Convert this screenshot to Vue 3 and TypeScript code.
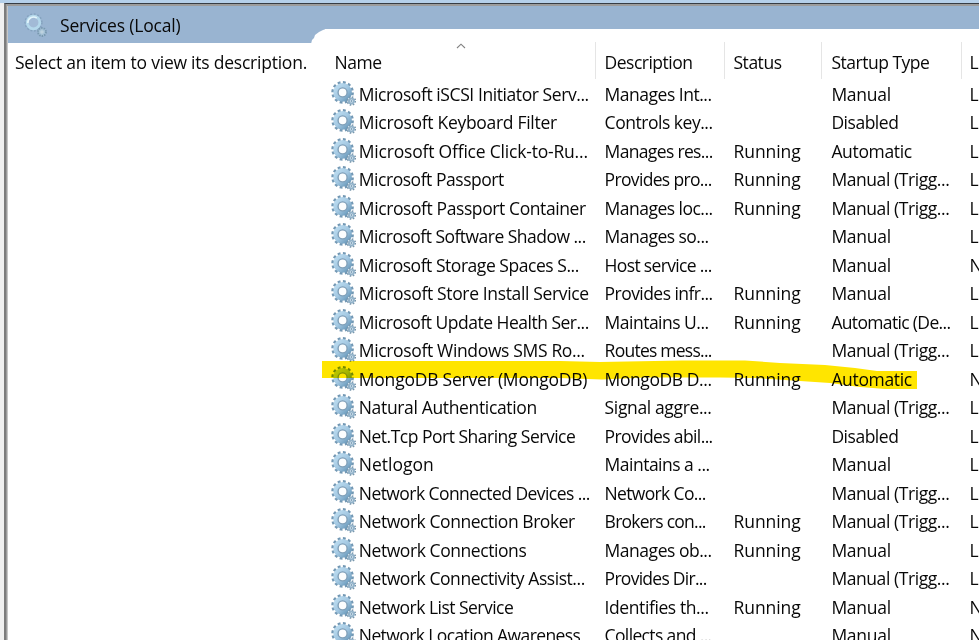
<script setup lang="ts">
interface Service {
  name: string
  nameWidth: number
  description: string
  descriptionWidth: number
  running: boolean
  startup: keyof typeof startupWidths
  logon: string
}

const startupWidths = {
  'Manual': 59.5,
  'Disabled': 67,
  'Automatic': 80.5,
  'Manual (Trigg...': 118,
  'Automatic (De...': 119,
}

const row = (
  name: string, nameWidth: number, description: string, descriptionWidth: number,
  running: boolean, startup: keyof typeof startupWidths, logon = 'Loc...',
): Service => ({ name, nameWidth, description, descriptionWidth, running, startup, logon })

const services: Service[] = [
  row('Microsoft iSCSI Initiator Serv...', 230, 'Manages Int...', 107, false, 'Manual'),
  row('Microsoft Keyboard Filter', 198, 'Controls key...', 108, false, 'Disabled'),
  row('Microsoft Office Click-to-Ru...', 229, 'Manages res...', 108, true, 'Automatic'),
  row('Microsoft Passport', 145, 'Provides pro...', 107, true, 'Manual (Trigg...'),
  row('Microsoft Passport Container', 227, 'Manages loc...', 108, true, 'Manual (Trigg...'),
  row('Microsoft Software Shadow ...', 227, 'Manages so...', 104, false, 'Manual'),
  row('Microsoft Storage Spaces S...', 220, 'Host service ...', 107, false, 'Manual', 'Net...'),
  row('Microsoft Store Install Service', 230, 'Provides infr...', 108, true, 'Manual'),
  row('Microsoft Update Health Ser...', 230, 'Maintains U...', 104, true, 'Automatic (De...'),
  row('Microsoft Windows SMS Ro...', 226, 'Routes mess...', 107, false, 'Manual (Trigg...'),
  row('MongoDB Server (MongoDB)', 228.5, 'MongoDB D...', 107, true, 'Automatic', 'Net...'),
  row('Natural Authentication', 178, 'Signal aggre...', 107, false, 'Manual (Trigg...'),
  row('Net.Tcp Port Sharing Service', 216.5, 'Provides abil...', 108, false, 'Disabled'),
  row('Netlogon', 75, 'Maintains a ...', 105, false, 'Manual'),
  row('Network Connected Devices ...', 231, 'Network Co...', 101, false, 'Manual (Trigg...'),
  row('Network Connection Broker', 216, 'Brokers con...', 101, true, 'Manual (Trigg...'),
  row('Network Connections', 167.5, 'Manages ob...', 107, true, 'Manual'),
  row('Network Connectivity Assist...', 226, 'Provides Dir...', 102, false, 'Manual (Trigg...'),
  row('Network List Service', 154.5, 'Identifies th...', 104, true, 'Manual', 'Net...'),
  row('Network Location Awareness', 221.5, 'Collects and ...', 107, false, 'Manual', 'Net...'),
]

// Spreads a label over the given width by adjusting its letter spacing.
const vFit = {
  mounted(el: HTMLElement, binding: { value: number }) {
    const natural = el.getBoundingClientRect().width
    const count = (el.textContent ?? '').length
    if (count) el.style.letterSpacing = `${(binding.value - natural) / count}px`
  },
}
</script>

<template>
  <div class="window">
    <svg class="defs" width="0" height="0">
      <defs>
        <linearGradient id="steel" x1="0" y1="0" x2="1" y2="1">
          <stop offset="0" stop-color="#bcdcf0" />
          <stop offset=".5" stop-color="#a3c8e2" />
          <stop offset="1" stop-color="#6797b9" />
        </linearGradient>
        <symbol id="gears" viewBox="0 0 26 26">
          <circle cx="12.6" cy="12.4" r="9.9" fill="none" stroke="#7398b4" stroke-width="2.8" stroke-dasharray="2.8 2.384" />
          <circle cx="12.6" cy="12.4" r="6.9" fill="none" stroke="url(#steel)" stroke-width="4.8" />
          <circle cx="12.6" cy="12.4" r="4.5" fill="#fbfdfe" stroke="#7f9fb8" stroke-width="1.4" />
          <circle cx="21.4" cy="21" r="3.9" fill="#fff" stroke="#7895ab" stroke-width="1.8" stroke-dasharray="1.5 1.563" />
          <circle cx="21.4" cy="21" r="2.5" fill="#e3eff6" stroke="#93b3ca" stroke-width="2" />
          <circle cx="21.4" cy="21" r=".9" fill="#7d9fb8" />
        </symbol>
      </defs>
    </svg>
    <div class="frame">
      <header class="banner">
        <svg class="banner-icon" viewBox="0 0 26 26">
          <circle cx="10.5" cy="10.5" r="8.4" fill="none" stroke="#84a2be" stroke-width="1.5" stroke-dasharray="1.8 1.8" />
          <circle cx="10.5" cy="10.5" r="6.3" fill="#a2bad6" stroke="#b4d8eb" stroke-width="2.8" />
          <path d="M4.8 11a5.8 5.8 0 0 1 9-5" fill="none" stroke="#e2f5fb" stroke-width="1.6" />
          <circle cx="19" cy="20" r="4" fill="#a3c0d5" stroke="#7898af" stroke-width="1.8" stroke-dasharray="1.5 1" />
          <circle cx="19" cy="20" r="1.8" fill="#bdd2df" />
        </svg>
        <span v-fit="120.5">Services (Local)</span>
      </header>
      <main class="content">
        <aside class="side"><span v-fit="292">Select an item to view its description.</span></aside>
        <section class="list">
          <svg class="tab-edge" viewBox="0 0 15 15"><path d="M0 15L1 11L3 9L4 6L8 3L12 1L15 0V15Z" fill="#fff" /></svg>
          <div class="head">
            <div class="cell name-head">
              <span v-fit="47">Name</span>
              <svg class="sort" viewBox="0 0 10 6"><path d="M1 5L5 1.2L9 5" fill="none" stroke="#828282" stroke-width="1.1" /></svg>
            </div>
            <div class="cell"><span v-fit="88">Description</span></div>
            <div class="cell"><span v-fit="48">Status</span></div>
            <div class="cell startup"><span v-fit="98">Startup Type</span></div>
            <div class="cell logon"><span>Log On As</span></div>
          </div>
          <div v-for="s in services" :key="s.name" class="row">
            <div class="name">
              <svg class="gear"><use href="#gears" /></svg>
              <span v-fit="s.nameWidth">{{ s.name }}</span>
            </div>
            <div><span v-fit="s.descriptionWidth">{{ s.description }}</span></div>
            <div><span v-if="s.running" v-fit="67">Running</span></div>
            <div class="startup"><span v-fit="startupWidths[s.startup]">{{ s.startup }}</span></div>
            <div class="logon"><span>{{ s.logon }}</span></div>
          </div>
        </section>
      </main>
    </div>
    <svg class="marker" viewBox="0 0 596 32">
      <path d="M0 2H238L278 3L360 1.5L423 1.5L458 4L503 6L533 9L555 12H595V30H563L538 28L508 24L478 22L433 19L398 18.5L323 18.5L280 20.5L238 19H0Z" fill="#ffe500" />
    </svg>
  </div>
</template>

<style>
body { overflow: hidden; background: #f0f0f0; }
</style>

<style scoped>
.window {
  position: relative;
  box-sizing: border-box;
  width: 979px;
  height: 640px;
  overflow: hidden;
  padding: 3px 0 0 4px;
  background: linear-gradient(#b5d0ea 3px, #f0f0f0 3px);
  color: #080808;
  font: 17.5px/28px "Open Sans", "Noto Sans", sans-serif;
}
.defs { position: absolute; }
.window span { display: inline-block; white-space: pre; font-variant-ligatures: none; }
.frame {
  box-sizing: border-box;
  height: 700px;
  border-left: 2px solid #7c7c7c;
  border-top: 1px solid #373d45;
  box-shadow: inset 1.5px 2px #9c9c9c;
  padding: 2px 0 0 1.5px;
}
.banner {
  display: flex;
  align-items: center;
  box-sizing: border-box;
  height: 37px;
  padding-left: 15px;
  background: #99b4d1;
}
.banner-icon { width: 26px; height: 26px; margin-right: 11.5px; }
.content { display: flex; height: 660px; background: #fff; }
.side { box-sizing: border-box; width: 303.5px; flex: none; padding: 5px 0 0 7.5px; }
.list {
  position: relative;
  flex: none;
  width: 668px;
  height: 660px;
  margin-top: -14px;
  padding-left: 14px;
  box-sizing: border-box;
  background: linear-gradient(#fff, #fff) 14px 0 no-repeat;
}
.tab-edge { position: absolute; left: 0; top: 0; width: 15px; height: 15px; }
.head, .row { display: grid; grid-template-columns: 271px 129px 97px 140px 80px; }
.head { height: 50.5px; }
.cell { box-sizing: border-box; height: 37px; margin-top: 13px; padding: 6px 0 0 8.5px; border-right: 1px solid #e5e5e5; }
.name-head { position: relative; padding-left: 9.5px; }
.sort { position: absolute; left: 131px; top: 1px; width: 10px; height: 6px; }
.row { height: 28.53px; line-height: 28px; }
.row > div { padding-left: 8.6px; height: 28px; }
.row > .name { display: flex; padding-left: 5px; }
.head > .startup, .row > .startup { padding-left: 9.4px; }
.head > .logon, .row > .logon { padding-left: 7.6px; letter-spacing: -.5px; }
.gear { width: 26px; height: 26px; margin-right: 2.8px; flex: none; }
.marker { position: absolute; left: 322px; top: 359px; width: 596px; height: 32px; mix-blend-mode: multiply; }
</style>
